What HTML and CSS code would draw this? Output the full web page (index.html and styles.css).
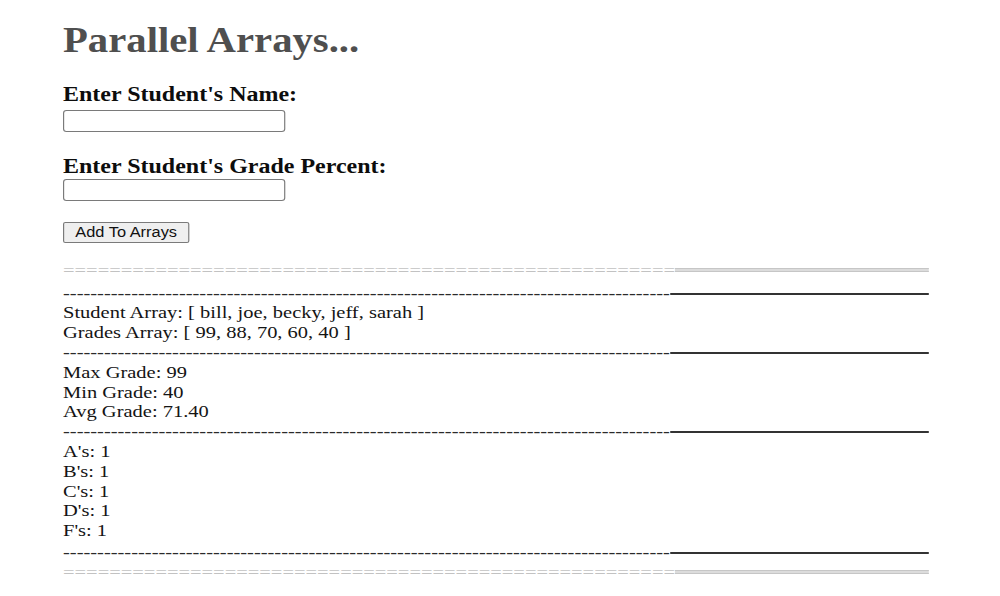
FILE: index.html
```html
<!DOCTYPE html>
<html>
<head>
<meta charset="utf-8">
<link rel="stylesheet" href="styles.css">
</head>
<body>
<div class="page">
  <h1 class="title">Parallel Arrays...</h1>
  <form class="form">
    <label class="label label-first" for="name">Enter Student's Name:</label>
    <input class="field field-first" id="name" type="text">
    <label class="label label-second" for="grade">Enter Student's Grade Percent:</label>
    <input class="field field-second" id="grade" type="text">
    <button class="btn" type="button">Add To Arrays</button>
  </form>
  <div class="output">
    <div class="rule-row eq-row"><span class="eq-text">=====================================================</span><span class="eq-band"></span></div>
    <div class="rule-row dash-row dash-first"><span class="dash-text">-----------------------------------------------------------------------------------------</span><span class="dash-line"></span></div>
    <div class="line">Student Array: [ bill, joe, becky, jeff, sarah ]</div>
    <div class="line">Grades Array: [ 99, 88, 70, 60, 40 ]</div>
    <div class="rule-row dash-row"><span class="dash-text">-----------------------------------------------------------------------------------------</span><span class="dash-line"></span></div>
    <div class="line">Max Grade: 99</div>
    <div class="line">Min Grade: 40</div>
    <div class="line">Avg Grade: 71.40</div>
    <div class="rule-row dash-row"><span class="dash-text">-----------------------------------------------------------------------------------------</span><span class="dash-line"></span></div>
    <div class="line">A's: 1</div>
    <div class="line">B's: 1</div>
    <div class="line">C's: 1</div>
    <div class="line">D's: 1</div>
    <div class="line">F's: 1</div>
    <div class="rule-row dash-row dash-last"><span class="dash-text">-----------------------------------------------------------------------------------------</span><span class="dash-line"></span></div>
    <div class="rule-row eq-row"><span class="eq-text">=====================================================</span><span class="eq-band"></span></div>
  </div>
</div>
</body>
</html>
```

FILE: styles.css
```css
html, body {
  margin: 0;
  padding: 0;
  background: #ffffff;
}

/* the reference capture is stretched horizontally by about 1.17 */
.page {
  margin-left: 63px;
  width: 740px;
  transform: scaleX(1.17);
  transform-origin: 0 0;
  font-family: "Liberation Serif", "Times New Roman", serif;
  color: #141414;
}

.title {
  margin: 21px 0 0 0;
  font-size: 34.8px;
  line-height: 40px;
  font-weight: bold;
  color: #4f4f4f;
}

.form {
  display: flex;
  flex-direction: column;
  align-items: flex-start;
}

.label {
  display: block;
  font-size: 20.5px;
  line-height: 24px;
  font-weight: bold;
  color: #0d0d0d;
}

.label-first {
  margin-top: 21px;
}

.label-second {
  margin-top: 22px;
}

.field {
  box-sizing: border-box;
  width: 190px;
  height: 22px;
  margin: 0;
  border: 1px solid #7a7a7a;
  border-radius: 3px;
  background: #fff;
  padding: 0 4px;
}

.field-first {
  margin-top: 4px;
}

.field-second {
  margin-top: 1px;
}

.btn {
  box-sizing: border-box;
  margin-top: 21px;
  width: 108px;
  height: 21px;
  padding: 0;
  font-family: "Liberation Sans", Arial, sans-serif;
  font-size: 14px;
  line-height: 19px;
  color: #111;
  background: #efefef;
  border: 1px solid #7a7a7a;
  border-radius: 2px;
}

.output {
  margin-top: 18.2px;
  font-size: 17.5px;
  line-height: 19.8px;
}

.line {
  height: 19.8px;
  white-space: nowrap;
}

.rule-row {
  display: flex;
  align-items: flex-start;
  height: 19.8px;
  white-space: nowrap;
}

.eq-text {
  display: block;
  flex: 0 0 auto;
  color: #c2c2c2;
}

.eq-band {
  display: block;
  flex: 1 1 auto;
  box-sizing: border-box;
  height: 4px;
  margin-top: 7px;
  border-top: 1.5px solid #c6c6c6;
  border-bottom: 1.5px solid #c6c6c6;
  background: #dcdcdc;
}

.dash-first {
  margin-top: 2.7px;
}

.dash-last {
  margin-top: 2px;
}

.dash-text {
  display: block;
  flex: 0 0 auto;
  color: #2a2a2a;
}

.dash-line {
  display: block;
  flex: 1 1 auto;
  height: 2px;
  margin-top: 9px;
  background: #333;
}
```
